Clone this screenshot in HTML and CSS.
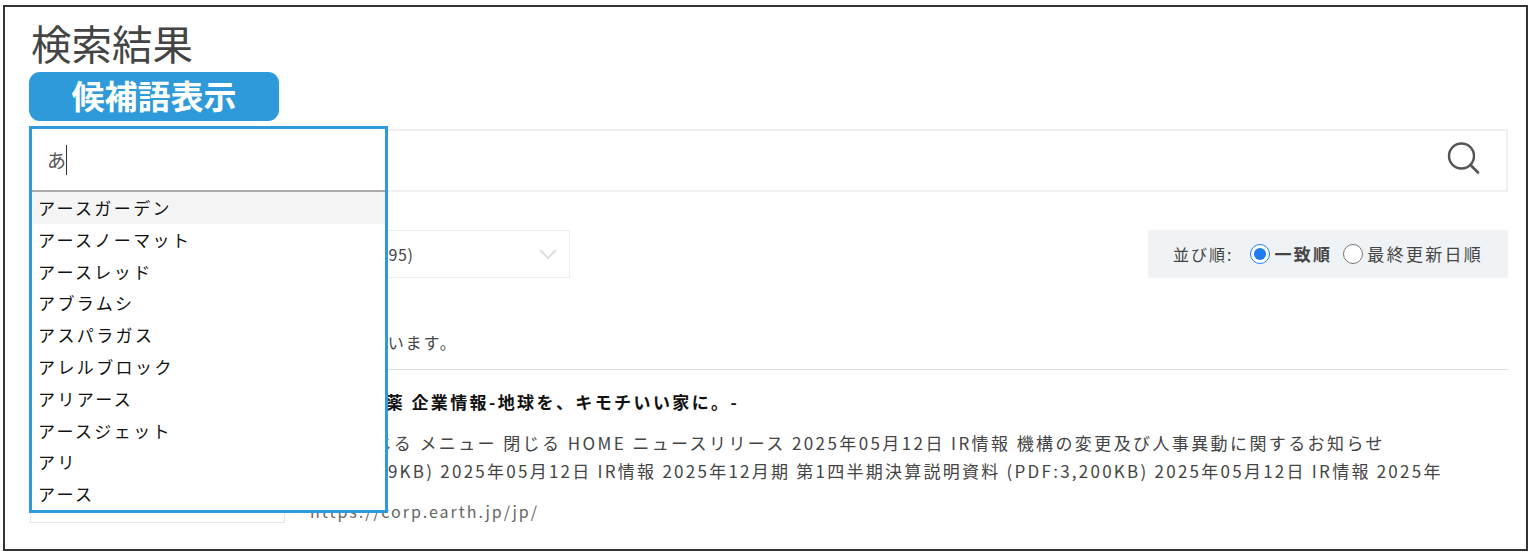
FILE: index.html
```html
<!DOCTYPE html>
<html lang="ja">
<head>
    <meta charset="utf-8">
    <title>検索結果</title>
    <link rel="stylesheet" href="styles.css">
</head>
<body>
    <div class="frame">
        <h1 class="page-title">検索結果</h1>
        <div class="badge">候補語表示</div>

        <div class="search-bar">
            <svg class="search-icon" width="36" height="36" viewBox="0 0 36 36">
                <circle cx="15.5" cy="15" r="12.5" fill="none" stroke="#555" stroke-width="2.4"/>
                <line x1="24.5" y1="24" x2="32" y2="31.5" stroke="#555" stroke-width="2.6" stroke-linecap="round"/>
            </svg>

            <!-- Suggest dropdown sits over the page -->
            <div class="suggest">
                <div class="suggest-input"><span>あ</span><i class="caret"></i></div>
                <ul class="suggest-list">
                    <li class="active">アースガーデン</li>
                    <li>アースノーマット</li>
                    <li>アースレッド</li>
                    <li>アブラムシ</li>
                    <li>アスパラガス</li>
                    <li>アレルブロック</li>
                    <li>アリアース</li>
                    <li>アースジェット</li>
                    <li>アリ</li>
                    <li>アース</li>
                </ul>
            </div>
        </div>

        <div class="controls">
            <div class="select">
                <span>すべてのカテゴリーの検索結果を表示します (95)</span>
                <svg width="20" height="12" viewBox="0 0 20 12">
                    <polyline points="2,2 10,10 18,2" fill="none" stroke="#ddd" stroke-width="2"/>
                </svg>
            </div>
            <div class="sort">
                <span class="sort-label">並び順:</span>
                <label class="sort-option selected"><input type="radio" name="sort" checked>一致順</label>
                <label class="sort-option"><input type="radio" name="sort">最終更新日順</label>
            </div>
        </div>

        <p class="count">全95件中の1件目から10件目までを表示しています。</p>

        <div class="result">
            <div class="thumb"></div>
            <div class="result-body">
                <h2 class="result-title">アース製薬 企業情報-地球を、キモチいい家に。-</h2>
                <p class="snippet">検索 閉じる メニュー 閉じる HOME ニュースリリース 2025年05月12日 IR情報 機構の変更及び人事異動に関するお知らせ</p>
                <p class="snippet snippet-tight">(PDF:2,19KB) 2025年05月12日 IR情報 2025年12月期 第1四半期決算説明資料 (PDF:3,200KB) 2025年05月12日 IR情報 2025年</p>
                <div class="url">https://corp.earth.jp/jp/</div>
            </div>
        </div>
    </div>
</body>
</html>
```

FILE: styles.css
```css
body {
    margin: 0;
    background-color: white;
    font-family: "Noto Sans CJK JP", "Noto Sans", sans-serif;
    color: #444;
    overflow: hidden;
}

.frame {
    box-sizing: border-box;
    width: 1525px;
    height: 546px;
    margin: 5px 0 0 3px;
    padding: 0 18px 0 25px;
    border: 2px solid #333;
    overflow: hidden;
}

.page-title {
    margin: 0 0 0 1px;
    height: 65px;
    font-size: 40.5px;
    font-weight: 400;
    line-height: 72px;
    color: #444;
}

.badge {
    width: 250px;
    height: 49px;
    margin-left: -1px;
    border-radius: 11px;
    background-color: #2e9ad9;
    color: white;
    font-size: 33px;
    font-weight: 700;
    line-height: 47px;
    text-align: center;
}

.search-bar {
    position: relative;
    box-sizing: border-box;
    height: 63px;
    margin-top: 8px;
    border: 2px solid #f0f0f0;
    display: flex;
    justify-content: flex-end;
    align-items: center;
    padding-right: 24px;
}

.search-icon {
    margin-top: -4px;
}

.suggest {
    position: absolute;
    top: -5px;
    left: -3px;
    box-sizing: border-box;
    width: 359px;
    height: 387px;
    border: 3px solid #2e9ad9;
    background-color: white;
    z-index: 2;
}

.suggest-input {
    box-sizing: border-box;
    height: 63px;
    padding-left: 15px;
    display: flex;
    align-items: center;
    border-bottom: 2px solid #aaa;
    font-size: 19px;
    color: #555;
}

.caret {
    width: 1px;
    height: 30px;
    background-color: #333;
}

.suggest-list {
    margin: 0;
    padding: 0;
    list-style: none;
}

.suggest-list li {
    height: 31.8px;
    padding-left: 6px;
    font-size: 17px;
    letter-spacing: 2.4px;
    line-height: 31.8px;
    color: #111;
}

.suggest-list li.active {
    background-color: #f5f5f5;
}

.controls {
    display: flex;
    justify-content: space-between;
    margin-top: 38px;
    height: 48px;
}

.select {
    box-sizing: border-box;
    width: 540px;
    border: 1px solid #eee;
    padding: 0 11px 0 16px;
    display: flex;
    justify-content: space-between;
    align-items: center;
    font-size: 16px;
    letter-spacing: 0.65px;
    line-height: 44px;
}

.sort {
    box-sizing: border-box;
    width: 360px;
    padding-left: 25px;
    background-color: #f0f3f5;
    display: flex;
    align-items: center;
    font-size: 16px;
    letter-spacing: 2px;
    line-height: 44px;
}

.sort-label {
    margin-right: 17px;
}

.sort-option {
    display: flex;
    align-items: center;
    margin-right: 11px;
    font-size: 17px;
    letter-spacing: 2.3px;
}

.sort-option.selected {
    font-weight: 700;
}

.sort-option input {
    width: 20px;
    height: 20px;
    margin: 0 4px 0 0;
    accent-color: #1e7bf0;
}

.count {
    margin: 52px 0 0;
    height: 39px;
    font-size: 16px;
    letter-spacing: 1.9px;
    line-height: 24px;
    border-bottom: 1px solid #ddd;
}

.result {
    display: flex;
    gap: 25px;
    margin-top: 16px;
}

.thumb {
    box-sizing: border-box;
    width: 255px;
    height: 137px;
    border: 1px solid #e4e4e4;
    flex-shrink: 0;
}

.result-title {
    margin: 0;
    font-size: 17px;
    font-weight: 700;
    letter-spacing: 2.4px;
    line-height: 32px;
    color: #111;
}

.snippet {
    margin: 11px 0 -11px;
    font-size: 17px;
    letter-spacing: 2.4px;
    line-height: 28px;
    white-space: nowrap;
}

.snippet-tight {
    letter-spacing: 2.25px;
    text-indent: -6px;
}

.url {
    margin-top: 24px;
    font-size: 16px;
    letter-spacing: 2px;
    line-height: 26px;
    color: #666;
}
```
